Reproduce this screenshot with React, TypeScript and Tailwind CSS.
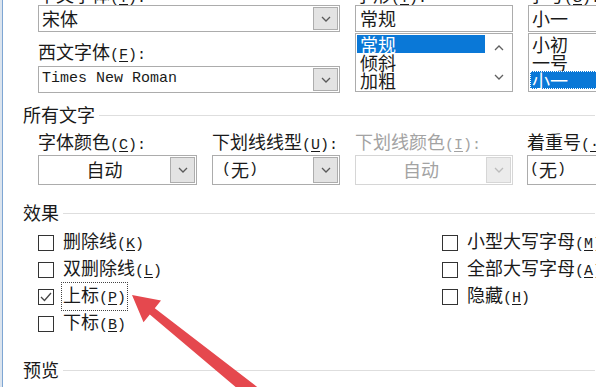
import React from "react";

function Lbl({ t, k, tail = ")", dim = false }: { t: string; k?: string; tail?: string; dim?: boolean }) {
  return (
    <span className={`whitespace-nowrap ${dim ? "text-[#a3a3a3]" : "text-[#1a1a1a]"}`}>
      <span className="font-['Noto_Sans_CJK_SC',sans-serif] text-[18px]">{t}</span>
      {k !== undefined && (
        <span className="font-['Liberation_Mono',monospace] text-[15px]">
          (<span className="underline underline-offset-2">{k}</span>
          {tail}
        </span>
      )}
    </span>
  );
}

function Chev({ c = "#606060", up = false }: { c?: string; up?: boolean }) {
  return (
    <svg width="10" height="6" viewBox="0 0 10 6">
      <path d={up ? "M1 5 L5 1 L9 5" : "M1 1 L5 5 L9 1"} fill="none" stroke={c} strokeWidth="1.3" />
    </svg>
  );
}

function Btn({ disabled = false }: { disabled?: boolean }) {
  return (
    <div
      className={`w-[25px] my-[1px] mr-[1px] flex items-center justify-center border ${
        disabled ? "bg-[#ececec] border-[#d6d6d6]" : "bg-[#e3e3e3] border-[#adadad]"
      }`}
    >
      <Chev c={disabled ? "#bcbcbc" : "#5a5a5a"} />
    </div>
  );
}

function Box({ checked = false }: { checked?: boolean }) {
  return (
    <div className="w-[16px] h-[16px] border border-[#333] bg-white flex items-center justify-center shrink-0">
      {checked && (
        <svg width="14" height="14" viewBox="0 0 14 14">
          <path d="M2 7 L5.5 10.5 L12 3" fill="none" stroke="#444" strokeWidth="1.3" />
        </svg>
      )}
    </div>
  );
}

function Header({ t }: { t: string }) {
  return (
    <div className="flex items-center h-[20px] pl-[20px] pr-[1px] gap-[4px]">
      <span className="leading-[20px]">
        <Lbl t={t} />
      </span>
      <div className="flex-1 h-px bg-[#dedede]" />
    </div>
  );
}

export default function App() {
  return (
    <div className="w-[600px] h-[387px] bg-white relative overflow-hidden flex">
      <div className="w-[2px] h-full bg-[#dbe4ee]" />
      <div className="w-[1px] h-full bg-[#7ea6d3]" />
      <div className="w-[593px] h-full overflow-hidden flex flex-col">
        {/* Top: fonts */}
        <div className="mt-[-16px] flex pl-[35px] gap-[15px]">
          <div className="w-[302px] shrink-0 flex flex-col">
            <div className="h-[20px] leading-[20px]">
              <Lbl t="中文字体" k="T" tail="):" />
            </div>
            <div className="mt-[1px] h-[27px] flex border border-[#acacac] bg-white">
              <div className="flex-1 flex items-center pl-[3px] leading-[20px]">
                <Lbl t="宋体" />
              </div>
              <Btn />
            </div>
            <div className="mt-[9px] h-[20px] leading-[20px]">
              <Lbl t="西文字体" k="F" tail="):" />
            </div>
            <div className="mt-[5px] h-[27px] flex border border-[#acacac] bg-white">
              <div className="flex-1 flex items-center pl-[3px] font-['Liberation_Mono',monospace] text-[15px] text-[#1a1a1a]">
                Times New Roman
              </div>
              <Btn />
            </div>
          </div>

          <div className="w-[158px] shrink-0 flex flex-col">
            <div className="h-[20px] leading-[20px]">
              <Lbl t="字形" k="Y" tail="):" />
            </div>
            <div className="mt-[1px] h-[27px] flex items-center border border-[#acacac] pl-[4px] leading-[20px]">
              <Lbl t="常规" />
            </div>
            <div className="mt-[1px] h-[59px] flex border border-[#acacac] bg-white">
              <div className="flex-1 flex flex-col p-[1px]">
                <div className="h-[18px] leading-[18px] bg-[#0a78d7] pl-[3px] font-['Noto_Sans_CJK_SC',sans-serif] text-[18px] text-white">
                  常规
                </div>
                <div className="h-[18px] leading-[18px] pl-[3px] font-['Noto_Sans_CJK_SC',sans-serif] text-[18px] text-[#1a1a1a]">
                  倾斜
                </div>
                <div className="h-[18px] leading-[18px] pl-[3px] font-['Noto_Sans_CJK_SC',sans-serif] text-[18px] text-[#1a1a1a]">
                  加粗
                </div>
              </div>
              <div className="w-[26px] flex flex-col items-center justify-between py-[11px]">
                <Chev up />
                <Chev />
              </div>
            </div>
          </div>

          <div className="w-[80px] shrink-0 flex flex-col">
            <div className="h-[20px] leading-[20px]">
              <Lbl t="字号" k="S" tail="):" />
            </div>
            <div className="mt-[1px] h-[27px] flex items-center border border-[#acacac] pl-[3px] leading-[20px]">
              <Lbl t="小一" />
            </div>
            <div className="mt-[1px] h-[59px] flex flex-col border border-[#acacac] bg-white p-[1px]">
              <div className="h-[18px] leading-[18px] pl-[2px] font-['Noto_Sans_CJK_SC',sans-serif] text-[18px] text-[#1a1a1a]">
                小初
              </div>
              <div className="h-[18px] leading-[18px] pl-[2px] font-['Noto_Sans_CJK_SC',sans-serif] text-[18px] text-[#1a1a1a]">
                一号
              </div>
              <div className="h-[18px] leading-[16px] bg-[#0a78d7] pl-[1px] border border-dotted border-white font-['Noto_Sans_CJK_SC',sans-serif] text-[18px] text-white">
                小一
              </div>
            </div>
          </div>
        </div>

        {/* 所有文字 */}
        <div className="mt-[12px]">
          <Header t="所有文字" />
        </div>
        <div className="mt-[6px] flex pl-[35px] h-[20px] leading-[20px]">
          <div className="w-[174px] shrink-0">
            <Lbl t="字体颜色" k="C" tail="):" />
          </div>
          <div className="w-[143px] shrink-0">
            <Lbl t="下划线线型" k="U" tail="):" />
          </div>
          <div className="w-[172px] shrink-0">
            <Lbl t="下划线颜色" k="I" tail="):" dim />
          </div>
          <div className="w-[80px] shrink-0">
            <Lbl t="着重号" k="·" tail="):" />
          </div>
        </div>
        <div className="mt-[4px] flex pl-[35px] h-[30px]">
          <div className="w-[159px] shrink-0 flex border border-[#acacac] bg-white">
            <div className="flex-1 flex items-center justify-center leading-[20px]">
              <Lbl t="自动" />
            </div>
            <Btn />
          </div>
          <div className="ml-[15px] w-[128px] shrink-0 flex border border-[#acacac] bg-white">
            <div className="flex-1 flex items-center pl-[9px] leading-[20px]">
              <span className="font-['Liberation_Mono',monospace] text-[15px] text-[#1a1a1a]">(</span>
              <Lbl t="无" />
              <span className="font-['Liberation_Mono',monospace] text-[15px] text-[#1a1a1a]">)</span>
            </div>
            <Btn />
          </div>
          <div className="ml-[15px] w-[158px] shrink-0 flex border border-[#d6d6d6] bg-white">
            <div className="flex-1 flex items-center justify-center leading-[20px]">
              <Lbl t="自动" dim />
            </div>
            <Btn disabled />
          </div>
          <div className="ml-[14px] w-[80px] shrink-0 flex border border-[#acacac] bg-white">
            <div className="flex-1 flex items-center pl-[2px] leading-[20px]">
              <span className="font-['Liberation_Mono',monospace] text-[15px] text-[#1a1a1a]">(</span>
              <Lbl t="无" />
              <span className="font-['Liberation_Mono',monospace] text-[15px] text-[#1a1a1a]">)</span>
            </div>
          </div>
        </div>

        {/* 效果 */}
        <div className="mt-[18px]">
          <Header t="效果" />
        </div>
        <div className="mt-[6px] flex pl-[35px]">
          <div className="w-[404px] shrink-0 flex flex-col">
            <div className="h-[27px] flex items-center gap-[9px] leading-[20px]">
              <Box />
              <Lbl t="删除线" k="K" />
            </div>
            <div className="h-[27px] flex items-center gap-[9px] leading-[20px]">
              <Box />
              <Lbl t="双删除线" k="L" />
            </div>
            <div className="h-[27px] flex items-center gap-[7px] leading-[20px]">
              <Box checked />
              <span className="border border-dotted border-[#444] px-[1px] py-[1px]">
                <Lbl t="上标" k="P" />
              </span>
            </div>
            <div className="h-[27px] flex items-center gap-[9px] leading-[20px]">
              <Box />
              <Lbl t="下标" k="B" />
            </div>
          </div>
          <div className="flex flex-col">
            <div className="h-[27px] flex items-center gap-[9px] leading-[20px]">
              <Box />
              <Lbl t="小型大写字母" k="M" />
            </div>
            <div className="h-[27px] flex items-center gap-[9px] leading-[20px]">
              <Box />
              <Lbl t="全部大写字母" k="A" />
            </div>
            <div className="h-[27px] flex items-center gap-[9px] leading-[20px]">
              <Box />
              <Lbl t="隐藏" k="H" />
            </div>
          </div>
        </div>

        {/* 预览 */}
        <div className="mt-[23px]">
          <Header t="预览" />
        </div>
      </div>

      <svg className="absolute inset-0 pointer-events-none" width="600" height="387" viewBox="0 0 600 387">
        <polygon
          points="132,295 161,300.4 154.8,308.2 260.4,389.5 251.6,400.5 149.8,314.4 143.5,322.2"
          fill="#e5484e"
        />
      </svg>
    </div>
  );
}
